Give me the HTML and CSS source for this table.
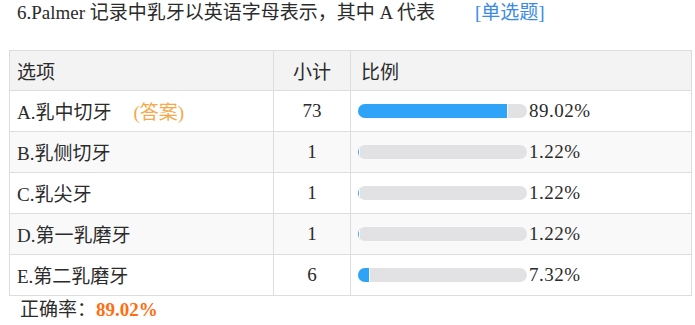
FILE: index.html
```html
<!DOCTYPE html>
<html lang="zh-CN">
<head>
<meta charset="utf-8">
<title>第6题统计</title>
<link rel="stylesheet" href="styles.css">
</head>
<body>
<div class="question">
  <div class="q-title">6.Palmer 记录中乳牙以英语字母表示，其中 A 代表<span class="q-type">[单选题]</span></div>
  <table class="stats">
    <colgroup>
      <col class="c-opt">
      <col class="c-cnt">
      <col class="c-pct">
    </colgroup>
    <thead>
      <tr><th class="opt">选项</th><th class="cnt">小计</th><th class="pct">比例</th></tr>
    </thead>
    <tbody>
      <tr>
        <td class="opt">A.乳中切牙<span class="answer">(答案)</span></td>
        <td class="cnt">73</td>
        <td class="pct"><div class="bar-wrap"><div class="bar"><div class="fill" style="width:89.02%"></div></div><span class="pval">89.02%</span></div></td>
      </tr>
      <tr class="alt">
        <td class="opt">B.乳侧切牙</td>
        <td class="cnt">1</td>
        <td class="pct"><div class="bar-wrap"><div class="bar"><div class="fill" style="width:1.22%"></div></div><span class="pval">1.22%</span></div></td>
      </tr>
      <tr>
        <td class="opt">C.乳尖牙</td>
        <td class="cnt">1</td>
        <td class="pct"><div class="bar-wrap"><div class="bar"><div class="fill" style="width:1.22%"></div></div><span class="pval">1.22%</span></div></td>
      </tr>
      <tr class="alt">
        <td class="opt">D.第一乳磨牙</td>
        <td class="cnt">1</td>
        <td class="pct"><div class="bar-wrap"><div class="bar"><div class="fill" style="width:1.22%"></div></div><span class="pval">1.22%</span></div></td>
      </tr>
      <tr>
        <td class="opt">E.第二乳磨牙</td>
        <td class="cnt">6</td>
        <td class="pct"><div class="bar-wrap"><div class="bar"><div class="fill" style="width:7.32%"></div></div><span class="pval">7.32%</span></div></td>
      </tr>
    </tbody>
  </table>
  <div class="rate">正确率：<span class="rate-val">89.02%</span></div>
</div>
</body>
</html>
```

FILE: styles.css
```css
html, body {
  margin: 0;
  padding: 0;
  background: #ffffff;
}

body {
  font-family: "Liberation Serif", "Noto Sans CJK SC", serif;
  font-size: 19px;
  color: #2b2b2b;
}

.question {
  padding: 0 4px 0 9px;
}

.q-title {
  height: 26px;
  line-height: 26px;
  padding-left: 8px;
  margin-bottom: 24px;
  white-space: nowrap;
}

.q-type {
  color: #3a8ae8;
  margin-left: 40px;
}

.stats {
  width: 682px;
  border-collapse: collapse;
  table-layout: fixed;
}

.c-opt { width: 264px; }
.c-cnt { width: 77px; }
.c-pct { width: 341px; }

.stats th,
.stats td {
  border: 1px solid #dddddd;
  font-weight: normal;
  padding: 0 0 1px 0;
  vertical-align: middle;
  white-space: nowrap;
}

.stats thead tr {
  height: 40px;
  background: #f3f3f3;
}

.stats tbody tr {
  height: 41px;
  background: #ffffff;
}

.stats tbody tr.alt {
  background: #f9f9f9;
}

.opt {
  text-align: left;
  padding-left: 7px !important;
}

.cnt {
  text-align: center;
}

th.pct {
  text-align: left;
  padding-left: 10px !important;
}

td.pct {
  padding-left: 7px !important;
}

.answer {
  color: #f5a94a;
  margin-left: 22px;
}

.bar-wrap {
  display: flex;
  align-items: center;
}

.bar {
  width: 169px;
  height: 14px;
  border-radius: 7px;
  background: #e2e2e4;
  overflow: hidden;
  display: flex;
}

.fill {
  height: 100%;
  background: #2ea3f7;
  border-right: 1px solid #ffffff;
  box-sizing: border-box;
}

.pval {
  margin-left: 2px;
  letter-spacing: 0.5px;
}

.rate {
  height: 28px;
  line-height: 28px;
  padding-left: 11px;
}

.rate-val {
  color: #ff6d12;
  font-weight: bold;
}
```
